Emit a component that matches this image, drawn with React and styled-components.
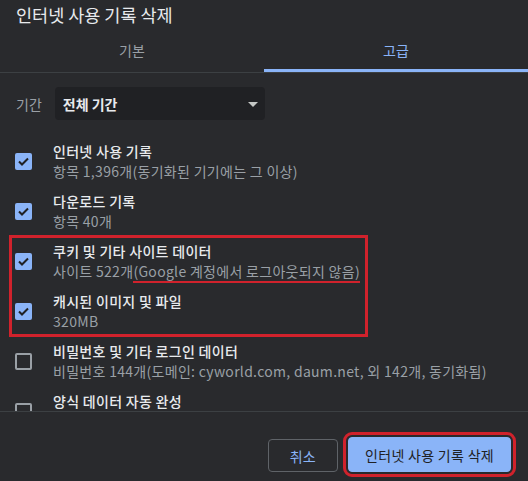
import React from "react";
import styled, { createGlobalStyle } from "styled-components";

const GlobalStyle = createGlobalStyle`
  html, body {
    margin: 0;
    padding: 0;
    background: #292a2d;
  }
  body {
    font-family: "Noto Sans CJK KR", "Noto Sans", sans-serif;
    color: #e8eaed;
  }
`;

const Dialog = styled.div`
  width: 528px;
  height: 481px;
  display: flex;
  flex-direction: column;
  background: #292a2d;
  overflow: hidden;
`;

const Title = styled.h1`
  margin: 0;
  padding: 0 16px;
  height: 30px;
  line-height: 30px;
  font-size: 17.5px;
  font-weight: 400;
  color: #e8eaed;
`;

const TabBar = styled.div`
  display: grid;
  grid-template-columns: 1fr 1fr;
  border-bottom: 1px solid #3c4043;
`;

const Tab = styled.div`
  height: 39px;
  line-height: 40px;
  text-align: center;
  font-size: 14px;
  color: ${(p) => (p.$active ? "#8ab4f8" : "#9aa0a6")};
  border-bottom: 3px solid ${(p) => (p.$active ? "#8ab4f8" : "transparent")};
`;

const Content = styled.div`
  height: 338px;
  overflow: hidden;
`;

const PeriodRow = styled.div`
  display: flex;
  align-items: center;
  gap: 13px;
  padding: 14px 16px 16px;
`;

const PeriodLabel = styled.span`
  font-size: 14px;
  color: #9aa0a6;
`;

const Select = styled.div`
  width: 210px;
  height: 33px;
  box-sizing: border-box;
  display: flex;
  align-items: center;
  justify-content: space-between;
  padding: 0 7px 0 8px;
  background: #202124;
  border-radius: 4px;
  font-size: 14px;
  font-weight: 700;
  color: #e8eaed;
`;

const Arrow = styled.span`
  width: 0;
  height: 0;
  border-left: 5px solid transparent;
  border-right: 5px solid transparent;
  border-top: 5px solid #c4c7c5;
  margin-top: 1px;
`;

const Row = styled.div`
  display: flex;
  align-items: center;
  gap: 21px;
  height: 50px;
  padding-left: 15px;
`;

const Box = styled.span`
  flex: none;
  width: 17px;
  height: 17px;
  box-sizing: border-box;
  border-radius: 2px;
  display: flex;
  align-items: center;
  justify-content: center;
  background: ${(p) => (p.$checked ? "#8ab4f8" : "transparent")};
  border: ${(p) => (p.$checked ? "none" : "2px solid #9aa0a6")};
`;

const Texts = styled.div`
  display: flex;
  flex-direction: column;
`;

const ItemTitle = styled.span`
  font-size: 14px;
  font-weight: 500;
  line-height: 20px;
  letter-spacing: 0.3px;
  color: #e8eaed;
`;

const ItemSub = styled.span`
  min-height: 20px;
  font-size: 14px;
  line-height: 20px;
  letter-spacing: 0.3px;
  color: #9aa0a6;
  white-space: nowrap;
`;

const Marked = styled.span`
  border-bottom: 2px solid #d0222c;
`;

const Highlight = styled.div`
  position: relative;
  &::after {
    content: "";
    position: absolute;
    left: 9px;
    top: -1px;
    width: 359px;
    height: 102px;
    box-sizing: border-box;
    border: 3px solid #d0222c;
    pointer-events: none;
  }
`;

const Footer = styled.div`
  flex: 1;
  display: flex;
  justify-content: flex-end;
  align-items: flex-end;
  gap: 10px;
  padding: 0 13px 9px 0;
  border-top: 1px solid #3c4043;
`;

const Button = styled.button`
  height: ${(p) => (p.$primary ? "35px" : "33px")};
  padding: 0 ${(p) => (p.$primary ? "16px" : "21px")};
  border-radius: 4px;
  font-family: inherit;
  font-size: 14px;
  letter-spacing: 0.3px;
  cursor: pointer;
  border: 1px solid ${(p) => (p.$primary ? "#8ab4f8" : "#5f6368")};
  background: ${(p) => (p.$primary ? "#8ab4f8" : "transparent")};
  color: ${(p) => (p.$primary ? "#202124" : "#8ab4f8")};
  outline: ${(p) => (p.$marked ? "3px solid #d0222c" : "none")};
  outline-offset: 2px;
  margin-right: ${(p) => (p.$marked ? "4px" : "0")};
`;

const Check = () => (
  <svg width="13" height="13" viewBox="0 0 13 13">
    <polyline
      points="2,6.5 5,9.5 11,3.5"
      fill="none"
      stroke="#202124"
      strokeWidth="2"
    />
  </svg>
);

const Item = ({ checked, title, children }) => (
  <Row>
    <Box $checked={checked}>{checked && <Check />}</Box>
    <Texts>
      <ItemTitle>{title}</ItemTitle>
      <ItemSub>{children}</ItemSub>
    </Texts>
  </Row>
);

export default function App() {
  return (
    <>
      <GlobalStyle />
      <Dialog>
        <Title>인터넷 사용 기록 삭제</Title>
        <TabBar>
          <Tab>기본</Tab>
          <Tab $active>고급</Tab>
        </TabBar>
        <Content>
          <PeriodRow>
            <PeriodLabel>기간</PeriodLabel>
            <Select>
              전체 기간
              <Arrow />
            </Select>
          </PeriodRow>
          <Item checked title="인터넷 사용 기록">
            항목 1,396개(동기화된 기기에는 그 이상)
          </Item>
          <Item checked title="다운로드 기록">
            항목 40개
          </Item>
          <Highlight>
            <Item checked title="쿠키 및 기타 사이트 데이터">
              사이트 522개<Marked>(Google 계정에서 로그아웃되지 않음)</Marked>
            </Item>
            <Item checked title="캐시된 이미지 및 파일">
              320MB
            </Item>
          </Highlight>
          <Item title="비밀번호 및 기타 로그인 데이터">
            비밀번호 144개(도메인: cyworld.com, daum.net, 외 142개, 동기화됨)
          </Item>
          <Item title="양식 데이터 자동 완성" />
        </Content>
        <Footer>
          <Button>취소</Button>
          <Button $primary $marked>
            인터넷 사용 기록 삭제
          </Button>
        </Footer>
      </Dialog>
    </>
  );
}
